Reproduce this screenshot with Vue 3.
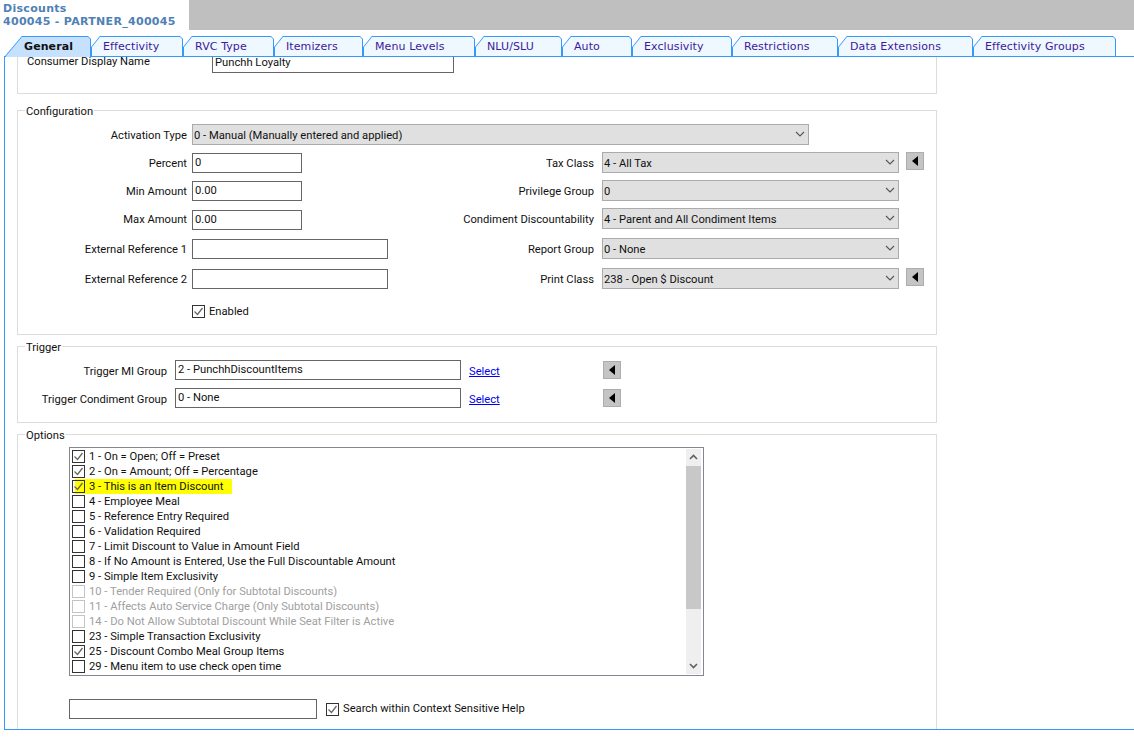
<script setup>
const tabs = [
  { name: "General", width: 86, active: true },
  { name: "Effectivity", width: 92 },
  { name: "RVC Type", width: 91 },
  { name: "Itemizers", width: 89 },
  { name: "Menu Levels", width: 112 },
  { name: "NLU/SLU", width: 87 },
  { name: "Auto", width: 70 },
  { name: "Exclusivity", width: 100 },
  { name: "Restrictions", width: 106 },
  { name: "Data Extensions", width: 135 },
  { name: "Effectivity Groups", width: 143 },
];

const options = [
  { text: "1 - On = Open; Off = Preset", on: true },
  { text: "2 - On = Amount; Off = Percentage", on: true },
  { text: "3 - This is an Item Discount", on: true, mark: true },
  { text: "4 - Employee Meal" },
  { text: "5 - Reference Entry Required" },
  { text: "6 - Validation Required" },
  { text: "7 - Limit Discount to Value in Amount Field" },
  { text: "8 - If No Amount is Entered, Use the Full Discountable Amount" },
  { text: "9 - Simple Item Exclusivity" },
  { text: "10 - Tender Required (Only for Subtotal Discounts)", off: true },
  { text: "11 - Affects Auto Service Charge (Only Subtotal Discounts)", off: true },
  { text: "14 - Do Not Allow Subtotal Discount While Seat Filter is Active", off: true },
  { text: "23 - Simple Transaction Exclusivity" },
  { text: "25 - Discount Combo Meal Group Items", on: true },
  { text: "29 - Menu item to use check open time" },
];
</script>

<template>
  <div class="page">
    <header class="head">
      <div class="title">Discounts<br />400045 - PARTNER_400045</div>
      <div class="head-fill"></div>
    </header>

    <nav class="tabs">
      <div
        v-for="t in tabs"
        :key="t.name"
        class="tab"
        :class="{ active: t.active }"
        :style="{ width: t.width + 'px' }"
      >
        <span>{{ t.name }}</span>
      </div>
    </nav>

    <main class="panel">
      <section class="group first">
        <div class="name-row">
          <label class="name-label">Consumer Display Name</label>
          <div class="input name-input">Punchh Loyalty</div>
        </div>
      </section>

      <fieldset class="group config">
        <legend>Configuration</legend>
        <div class="config-grid">
          <label class="lbl">Activation Type</label>
          <div class="select activation">0 - Manual (Manually entered and applied)<svg class="chev" viewBox="0 0 10 6"><path d="M1 1l4 4 4-4" /></svg></div>

          <label class="lbl">Percent</label>
          <div class="input w110 r1">0</div>
          <label class="lbl lbl2">Tax Class</label>
          <div class="select">4 - All Tax<svg class="chev" viewBox="0 0 10 6"><path d="M1 1l4 4 4-4" /></svg></div>
          <button class="arrow cfg-arrow"><svg viewBox="0 0 8 12"><path d="M7 1v10L1 6z" /></svg></button>

          <label class="lbl">Min Amount</label>
          <div class="input w110 r1">0.00</div>
          <label class="lbl lbl2">Privilege Group</label>
          <div class="select">0<svg class="chev" viewBox="0 0 10 6"><path d="M1 1l4 4 4-4" /></svg></div>
          <span></span>

          <label class="lbl">Max Amount</label>
          <div class="input w110 r2">0.00</div>
          <label class="lbl lbl2">Condiment Discountability</label>
          <div class="select">4 - Parent and All Condiment Items<svg class="chev" viewBox="0 0 10 6"><path d="M1 1l4 4 4-4" /></svg></div>
          <span></span>

          <label class="lbl">External Reference 1</label>
          <div class="input w196 r1"></div>
          <label class="lbl lbl2">Report Group</label>
          <div class="select">0 - None<svg class="chev" viewBox="0 0 10 6"><path d="M1 1l4 4 4-4" /></svg></div>
          <span></span>

          <label class="lbl">External Reference 2</label>
          <div class="input w196 r1"></div>
          <label class="lbl lbl2">Print Class</label>
          <div class="select">238 - Open $ Discount<svg class="chev" viewBox="0 0 10 6"><path d="M1 1l4 4 4-4" /></svg></div>
          <button class="arrow cfg-arrow"><svg viewBox="0 0 8 12"><path d="M7 1v10L1 6z" /></svg></button>

          <span></span>
          <div class="check-row enabled">
            <span class="box"><svg viewBox="0 0 13 13"><path d="M2.5 6.5l3 3 5-6.5" /></svg></span>
            Enabled
          </div>
        </div>
      </fieldset>

      <fieldset class="group trigger">
        <legend>Trigger</legend>
        <div class="trigger-row">
          <label class="tlbl">Trigger MI Group</label>
          <div class="input tinput">2 - PunchhDiscountItems</div>
          <a class="link">Select</a>
          <button class="arrow"><svg viewBox="0 0 8 12"><path d="M7 1v10L1 6z" /></svg></button>
        </div>
        <div class="trigger-row">
          <label class="tlbl">Trigger Condiment Group</label>
          <div class="input tinput">0 - None</div>
          <a class="link">Select</a>
          <button class="arrow"><svg viewBox="0 0 8 12"><path d="M7 1v10L1 6z" /></svg></button>
        </div>
      </fieldset>

      <fieldset class="group options">
        <legend>Options</legend>
        <div class="listbox">
          <div class="list">
            <div
              v-for="o in options"
              :key="o.text"
              class="opt"
              :class="{ mark: o.mark, off: o.off }"
            >
              <span class="box"><svg v-if="o.on" viewBox="0 0 13 13"><path d="M2.5 6.5l3 3 5-6.5" /></svg></span>
              <span class="txt">{{ o.text }}</span>
            </div>
          </div>
          <div class="scroll">
            <svg class="scroll-btn" viewBox="0 0 15 17"><path d="M4 10l3.5-3.5L11 10" /></svg>
            <div class="thumb"></div>
            <div class="track"></div>
            <svg class="scroll-btn" viewBox="0 0 15 17"><path d="M4 7l3.5 3.5L11 7" /></svg>
          </div>
        </div>
        <div class="search-row">
          <div class="input search"></div>
          <div class="check-row">
            <span class="box"><svg viewBox="0 0 13 13"><path d="M2.5 6.5l3 3 5-6.5" /></svg></span>
            <span class="txt help">Search within Context Sensitive Help</span>
          </div>
        </div>
      </fieldset>
    </main>
  </div>
</template>

<style>
body {
  background: #fff;
}
</style>

<style scoped>
.page {
  width: 1134px;
  height: 754px;
  overflow: hidden;
  background: #fff;
  font-family: Roboto, "Liberation Sans", Arial, sans-serif;
  font-size: 11.2px;
  color: #111;
}
.head {
  display: flex;
  height: 30px;
}
.title {
  width: 189px;
  padding: 2px 0 0 3px;
  box-sizing: border-box;
  font-family: "DejaVu Sans", Verdana, sans-serif;
  font-size: 11px;
  font-weight: 700;
  line-height: 13px;
  letter-spacing: 0.3px;
  color: #4f81b5;
  white-space: nowrap;
}
.head-fill {
  flex: 1;
  background: #bfbfbf;
}
.tabs {
  display: flex;
  height: 20px;
  margin: 6px 0 0 5px;
  position: relative;
  z-index: 1;
}
.tab {
  position: relative;
  height: 20px;
  background: #3399ff;
  clip-path: polygon(0 100%, 0 11px, 8px 1px, 9px 0, calc(100% - 3px) 0, 100% 3px, 100% 100%);
  font-family: "DejaVu Sans", Verdana, sans-serif;
  font-size: 11px;
  letter-spacing: 0.1px;
  color: #3c1a9c;
  white-space: nowrap;
}
.tab::before {
  content: "";
  position: absolute;
  inset: 1px 1px 0 1px;
  background: #eff7ff;
  clip-path: polygon(0 100%, 0 10px, 8px 0, calc(100% - 2px) 0, 100% 2px, 100% 100%);
}
.tab span {
  position: relative;
  display: block;
  padding: 4px 0 0 12px;
}
.tab.active {
  height: 21px;
  margin-bottom: -1px;
  clip-path: polygon(0 100%, 0 20px, 16px 1px, 17px 0, calc(100% - 3px) 0, 100% 3px, 100% 100%);
  font-weight: 700;
  color: #111;
}
.tab.active::before {
  inset: 1px 1px 0 1px;
  background: #c5e1fd;
  clip-path: polygon(0 100%, 0 19px, 16px 0, calc(100% - 2px) 0, 100% 2px, 100% 100%);
}
.tab.active span {
  padding-left: 19px;
}
.panel {
  margin-left: 4px;
  height: 672px;
  overflow: hidden;
  border-top: 1px solid #3399ff;
  border-left: 1px solid #3399ff;
  border-bottom: 1px solid #3399ff;
  box-sizing: content-box;
}
.group {
  width: 920px;
  margin: 0 0 0 12px;
  padding: 0;
  box-sizing: border-box;
  border: 1px solid #dcdcdc;
  min-width: 0;
}
legend {
  margin-left: 7px;
  padding: 0 1px;
  line-height: 15px;
  height: 13px;
}
.lbl,
.tlbl {
  text-align: right;
  white-space: nowrap;
}
.first {
  height: 46px;
  margin-top: -9px;
  border-top: none;
}
.name-row {
  display: flex;
  align-items: flex-start;
}
.name-label {
  width: 135px;
  box-sizing: border-box;
  padding-left: 9px;
  margin-top: 7px;
  line-height: 14px;
  white-space: nowrap;
}
.name-input {
  width: 242px;
  margin-left: 59px;
  margin-top: 5px;
  padding-left: 1px;
  line-height: 22px;
}
.config {
  height: 231px;
  margin-top: 10px;
}
.config-grid {
  display: grid;
  grid-template-columns: 169px 258px 142px 297px 20px;
  grid-template-rows: 28px 28px 28px 30px 30px 30px 30px;
  column-gap: 5px;
  margin-top: 7px;
  align-items: start;
}
.lbl {
  line-height: 20px;
  padding-top: 2px;
}
.lbl2 {
  padding-right: 3px;
}
.input {
  height: 20px;
  box-sizing: border-box;
  border: 1px solid #666;
  background: #fff;
  padding-left: 2px;
  line-height: 18px;
  white-space: nowrap;
}
.w110 {
  width: 110px;
}
.w196 {
  width: 196px;
}
.r1 {
  margin-top: 1px;
}
.r2 {
  margin-top: 2px;
}
.select {
  position: relative;
  height: 21px;
  box-sizing: border-box;
  border: 1px solid #ababab;
  background: #e0e0e0;
  padding-left: 1px;
  line-height: 21px;
  white-space: nowrap;
}
.activation {
  grid-column: 2 / 6;
  width: 617px;
}
.chev {
  position: absolute;
  right: 3px;
  top: 6px;
  width: 10px;
  height: 6px;
  fill: none;
  stroke: #555;
  stroke-width: 1.1;
}
.arrow {
  display: flex;
  align-items: center;
  justify-content: center;
  width: 18px;
  height: 18px;
  padding: 0;
  box-sizing: border-box;
  border: 1px solid #adadad;
  background: #c4c4c4;
}
.arrow svg {
  width: 8px;
  height: 12px;
  fill: #000;
}
.cfg-arrow {
  margin-left: 2px;
}
.check-row {
  display: flex;
  align-items: center;
  gap: 4px;
  white-space: nowrap;
}
.enabled {
  grid-column: 2;
  height: 26px;
}
.box {
  display: block;
  flex: none;
  width: 13px;
  height: 13px;
  box-sizing: border-box;
  border: 1px solid #333;
}
.box svg {
  display: block;
  width: 13px;
  height: 13px;
  margin: -1px;
  fill: none;
  stroke: #666;
  stroke-width: 1.3;
}
.txt {
  padding-bottom: 1px;
}
.help {
  padding-bottom: 2px;
}
.trigger {
  height: 83px;
  margin-top: 5px;
  padding-top: 3px;
}
.trigger-row {
  display: flex;
  align-items: center;
  height: 28px;
}
.tlbl {
  width: 149px;
  padding-top: 2px;
}
.tinput {
  width: 286px;
  margin-left: 8px;
}
.link {
  width: 134px;
  margin-left: 8px;
  padding-top: 2px;
  color: #0000ee;
  text-decoration: underline;
}
.options {
  height: 340px;
  margin-top: 5px;
}
.listbox {
  display: flex;
  justify-content: space-between;
  width: 635px;
  height: 229px;
  margin: 6px 0 0 51px;
  box-sizing: border-box;
  border: 1px solid #828790;
  padding: 1px 2px 1px 2px;
}
.opt {
  display: flex;
  align-items: center;
  gap: 4px;
  height: 15px;
  white-space: nowrap;
}
.opt.mark {
  background: linear-gradient(#ffff00, #ffff00) no-repeat 3px 0 / 157px 100%;
}
.opt.off {
  color: #a0a0a0;
}
.opt.off .box {
  border-color: #c4c4c4;
}
.scroll {
  display: flex;
  flex-direction: column;
  width: 15px;
  background: #efefef;
}
.scroll-btn {
  flex: none;
  width: 15px;
  height: 17px;
  fill: none;
  stroke: #606060;
  stroke-width: 1.6;
}
.thumb {
  height: 143px;
  background: #c8c8c8;
}
.track {
  flex: 1;
}
.search-row {
  display: flex;
  align-items: center;
  gap: 9px;
  margin: 23px 0 0 51px;
}
.search {
  width: 248px;
}
</style>
